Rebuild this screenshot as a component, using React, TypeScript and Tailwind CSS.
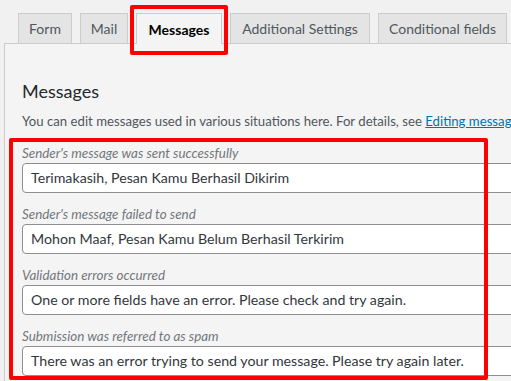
export default function App() {
  const tabs = [
    { label: "Form", w: "w-[54px]" },
    { label: "Mail", w: "w-[48px]" },
    { label: "Messages", w: "w-[86px]", active: true },
    { label: "Additional Settings", w: "w-[140px]" },
    { label: "Conditional fields", w: "w-[129px]" },
  ];

  const messages = [
    { label: "Sender's message was sent successfully", value: "Terimakasih, Pesan Kamu Berhasil Dikirim" },
    { label: "Sender's message failed to send", value: "Mohon Maaf, Pesan Kamu Belum Berhasil Terkirim" },
    { label: "Validation errors occurred", value: "One or more fields have an error. Please check and try again." },
    { label: "Submission was referred to as spam", value: "There was an error trying to send your message. Please try again later." },
  ];

  return (
    <main className="relative w-[511px] h-[381px] overflow-hidden bg-[#f1f1f1] font-['Lato',sans-serif]">
      <div className="pl-[4px] pt-[13px]">
        <ul className="flex items-start gap-2 pl-[14px]">
          {tabs.map((tab) => (
            <li
              key={tab.label}
              className={
                tab.active
                  ? `${tab.w} relative z-10 h-[31px] flex items-center justify-center border border-b-0 border-[#ccc] bg-[#f4f4f4] text-[14px] font-bold text-black`
                  : `${tab.w} h-[30px] flex items-center justify-center border border-b-0 border-[#ccc] bg-[#e4e4e4] text-[14px] text-[#50575e]`
              }
            >
              {tab.label}
            </li>
          ))}
        </ul>

        <section className="-mt-px h-[400px] border-l border-t border-[#ccc] bg-[#f4f4f4] pl-[17px] pt-[35px]">
          <h2 className="h-[24px] text-[18px] leading-[24px] text-[#23282d]">Messages</h2>
          <p className="mt-[9px] whitespace-nowrap text-[13.2px] leading-[18px] text-[#50575e]">
            You can edit messages used in various situations here. For details, see{" "}
            <a className="text-[#0073aa] underline">Editing messages</a>.
          </p>

          <div className="mt-[13px]">
            {messages.map((m) => (
              <div key={m.label} className="mb-[11px]">
                <label className="block h-[20px] text-[13.4px] italic leading-[20px] text-[#72777c]">{m.label}</label>
                <div className="flex h-[30px] w-[560px] items-center rounded-[4px] border border-[#8c8f94] bg-white px-[8px] text-[14.2px] text-[#32373c] whitespace-nowrap">
                  {m.value}
                </div>
              </div>
            ))}
          </div>
        </section>
      </div>

      <div className="absolute left-[130px] top-[5px] h-[50px] w-[98px] rounded-[2px] border-4 border-[#ff0000]" />
      <div className="absolute left-[9px] top-[138px] h-[242px] w-[479px] rounded-[2px] border-4 border-[#ff0000]" />
    </main>
  );
}
